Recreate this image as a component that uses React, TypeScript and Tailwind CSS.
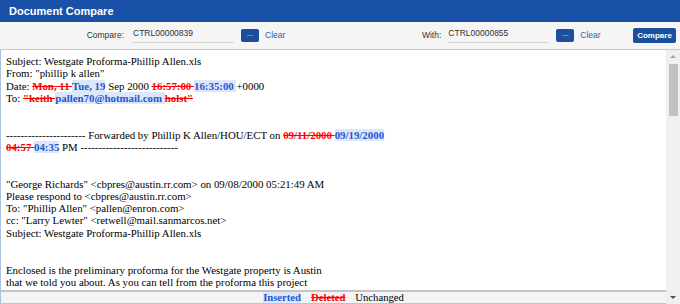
import React from "react"

const serif = { fontFamily: '"Liberation Serif", "Times New Roman", serif' }

function Del({ children }: { children: React.ReactNode }) {
  return <span className="font-bold text-[#ff0000] line-through">{children}</span>
}

function Ins({ children }: { children: React.ReactNode }) {
  return <span className="font-bold text-[#1f55d6] bg-[#dce7f8]">{children}</span>
}

function PickField({ label, value, labelW, gap }: { label: string; value: string; labelW: string; gap: string }) {
  return (
    <div className="flex items-center">
      <span className={`${labelW} text-right text-[8.5px] text-[#333]`}>{label}</span>
      <div className={`${gap} w-[102px] h-[15px] border-b border-[#d6d6d6] text-[8.5px] text-[#333] leading-[11px] pl-[1px]`}>
        {value}
      </div>
      <button className="ml-[7px] w-[18px] h-[13px] rounded-[2px] bg-[#1b4f9e] text-white text-[8px] leading-[6px] pb-[4px]">
        ...
      </button>
      <span className="ml-[6px] text-[8.5px] text-[#2c62b4]">Clear</span>
    </div>
  )
}

export default function App() {
  return (
    <div className="w-[680px] h-[304px] flex flex-col bg-white overflow-hidden" style={{ fontFamily: '"Liberation Sans", Arial, sans-serif' }}>
      <div className="h-[22px] shrink-0 bg-[#1a51a8] flex items-center pl-[9px]">
        <span className="text-white font-bold text-[11px]">Document Compare</span>
      </div>

      <div className="h-[28px] shrink-0 bg-[#f5f5f5] border-b border-[#c8c8c8] flex items-center">
        <PickField label="Compare:" value="CTRL00000839" labelW="w-[124px]" gap="ml-[8px]" />
        <PickField label="With:" value="CTRL00000855" labelW="w-[156px]" gap="ml-[6px]" />
        <button className="ml-auto mr-[4px] w-[43px] h-[15px] rounded-[2px] bg-[#1b4f9e] text-white text-[8px] font-bold">
          Compare
        </button>
      </div>

      <div className="flex-1 flex min-h-0 border-l border-[#a9c1dc]">
        <div className="flex-1 flex flex-col min-w-0">
          <div className="flex-1 pl-[5px] pt-[5px] text-[10.85px] leading-[12.27px] text-black whitespace-nowrap" style={serif}>
            <div>Subject: Westgate Proforma-Phillip Allen.xls</div>
            <div>From: "phillip k allen"</div>
            <div>
              Date: <Del>Mon, 11 </Del><Ins>Tue, 19</Ins> Sep 2000 <Del>16:57:00 </Del><Ins>16:35:00 </Ins>+0000
            </div>
            <div>
              To: <Del>"keith </Del><Ins>pallen70@hotmail.com </Ins><Del>holst"</Del>
            </div>
            <div>&nbsp;</div>
            <div>&nbsp;</div>
            <div>
              ---------------------- Forwarded by Phillip K Allen/HOU/ECT on <Del>09/11/2000 </Del>
              <Ins>09/19/2000 </Ins>
            </div>
            <div>
              <Del>04:57 </Del><Ins>04:35</Ins> PM ---------------------------
            </div>
            <div>&nbsp;</div>
            <div>&nbsp;</div>
            <div>"George Richards" &lt;cbpres@austin.rr.com&gt; on 09/08/2000 05:21:49 AM</div>
            <div>Please respond to &lt;cbpres@austin.rr.com&gt;</div>
            <div>To: "Phillip Allen" &lt;pallen@enron.com&gt;</div>
            <div>cc: "Larry Lewter" &lt;retwell@mail.sanmarcos.net&gt;</div>
            <div>Subject: Westgate Proforma-Phillip Allen.xls</div>
            <div>&nbsp;</div>
            <div>&nbsp;</div>
            <div>Enclosed is the preliminary proforma for the Westgate property is Austin</div>
            <div>that we told you about. As you can tell from the proforma this project</div>
          </div>
          <div className="h-[14px] shrink-0 bg-[#f4f4f4] border-t-2 border-[#c4c4c4] border-b border-b-[#c4c4c4] flex items-center justify-center gap-[10px] text-[10.67px] leading-[11px]" style={serif}>
            <Ins>Inserted</Ins>
            <Del>Deleted</Del>
            <span className="text-black">Unchanged</span>
          </div>
        </div>

        <div className="w-[14px] shrink-0 bg-[#f0f0f0] flex flex-col items-center">
          <svg width="14" height="13" viewBox="0 0 14 13" className="shrink-0">
            <path d="M4 8 L7 5 L10 8 Z" fill="#a3a3a3" />
          </svg>
          <div className="w-[9px] h-[52px] bg-[#c1c1c1] mt-[1px]" />
          <div className="flex-1" />
          <svg width="14" height="13" viewBox="0 0 14 13" className="shrink-0">
            <path d="M4 5 L7 8 L10 5 Z" fill="#505050" />
          </svg>
        </div>
      </div>
    </div>
  )
}
